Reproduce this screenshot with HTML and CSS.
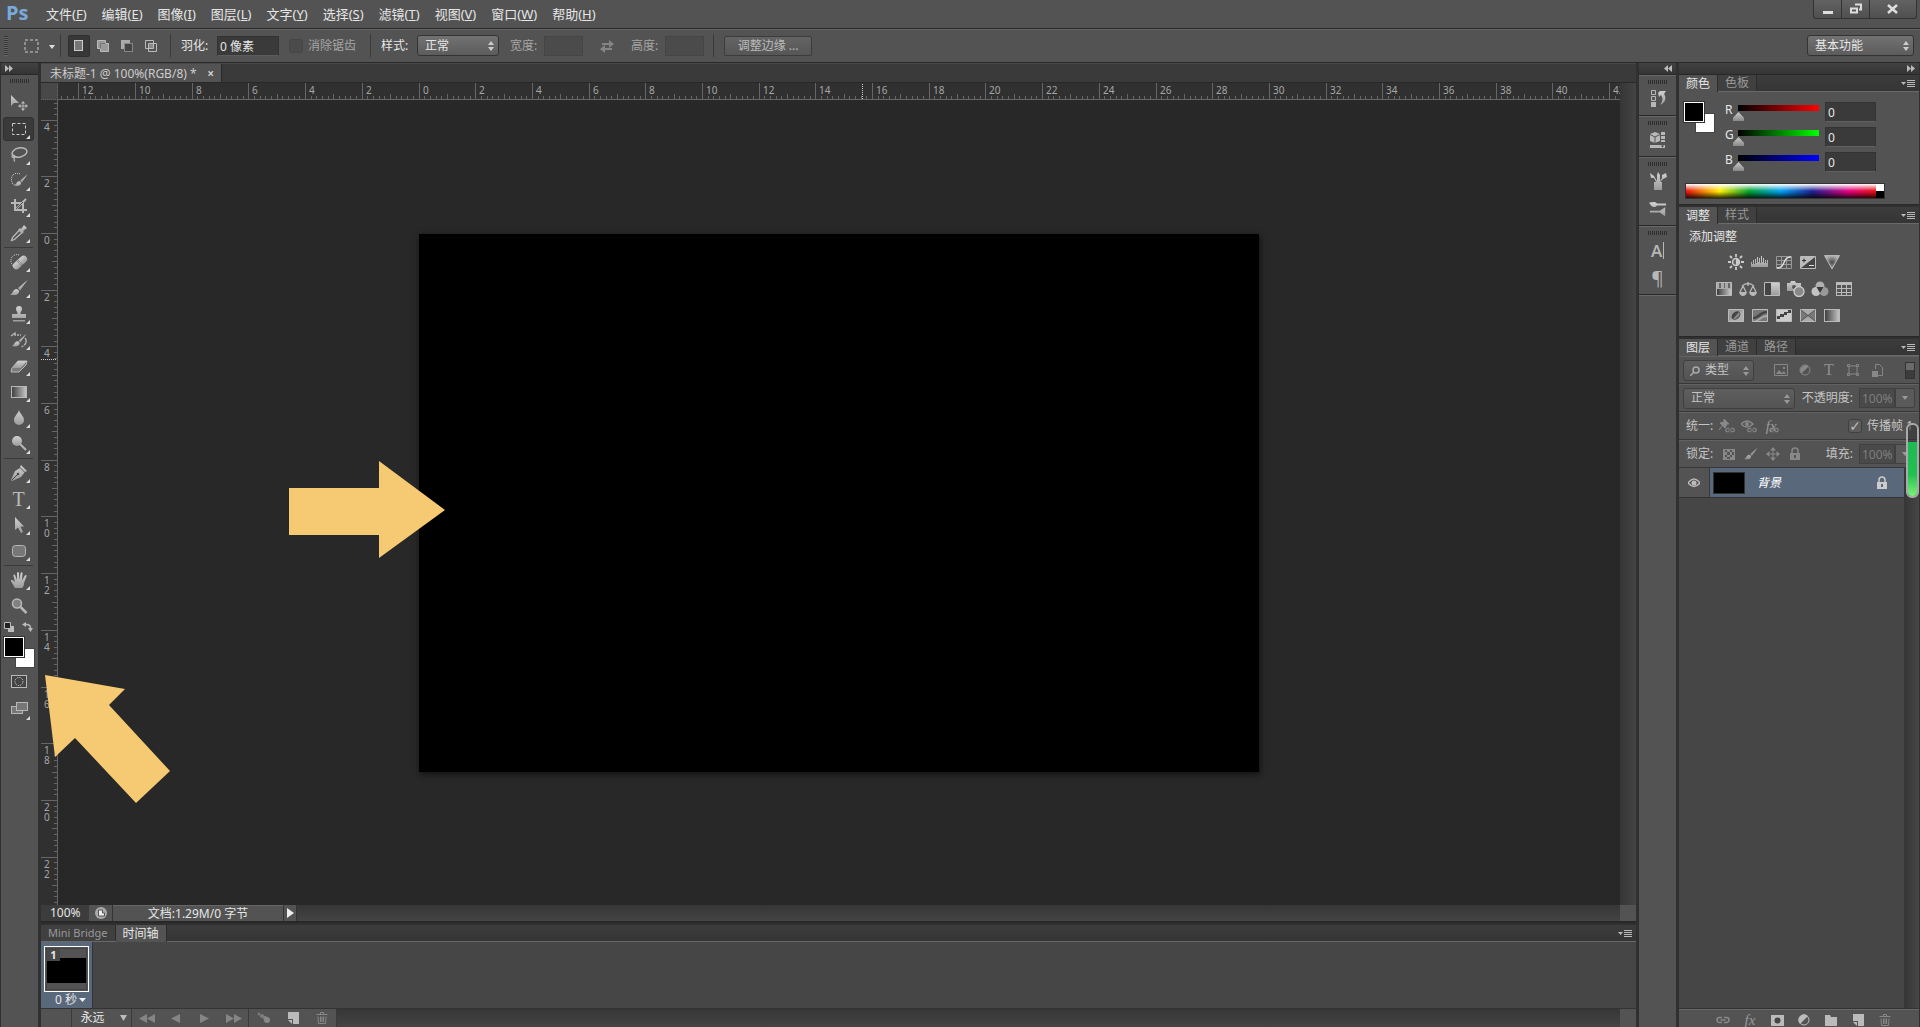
FILE: index.html
```html
<!DOCTYPE html>
<html lang="zh-CN">
<head>
<meta charset="utf-8">
<title>未标题-1 @ 100%(RGB/8)</title>
<link rel="stylesheet" href="styles.css">
</head>
<body>
<svg class="defs" aria-hidden="true">
  <defs>
    <linearGradient id="metal" x1="0" y1="0" x2="0" y2="1"><stop offset="0" stop-color="#d0d0d0"/><stop offset="1" stop-color="#9c9c9c"/></linearGradient>
    <linearGradient id="ramp"><stop offset="0" stop-color="#3c3c3c"/><stop offset="1" stop-color="#c8c8c8"/></linearGradient>
    <radialGradient id="glow"><stop offset="0" stop-color="#4a4a4a"/><stop offset="1" stop-color="#b4b4b4"/></radialGradient>
    <symbol id="updown" viewBox="0 0 6 10"><path d="M0 4l3-4 3 4zM0 6l3 4 3-4z" fill="currentColor"/></symbol>
    <symbol id="flyout" viewBox="0 0 14 8"><path d="M0 2h5L2.500 5z" fill="#b8b8b8"/><path d="M6 0h8v1H6zM6 2h8v1H6zM6 4h8v1H6zM6 6h8v1H6z" fill="#b8b8b8"/></symbol>
    <symbol id="link" viewBox="0 0 14 8"><path d="M6 1.500H3.500a2.500 2.500 0 0 0 0 5H6M8 1.500h2.500a2.500 2.500 0 0 1 0 5H8M4.500 4h5" fill="none" stroke="currentColor" stroke-width="1.600"/></symbol>
    <symbol id="trash" viewBox="0 0 12 12"><path d="M4.500 2V.500h3V2M.500 2.500h11M2 4.500l.5 7h7l.5-7M4.500 4.500v5.500M6 4.500v5.500M7.500 4.500v5.500" fill="none" stroke="currentColor"/></symbol>
    <symbol id="newpage" viewBox="0 0 12 12"><path d="M1 0h11v12H6V7H1z" fill="#bbb"/><path d="M1 8h4v4z" fill="#bbb"/></symbol>
    <symbol id="lock" viewBox="0 0 12 14"><path d="M3 6V4a3 3 0 0 1 6 0v2" fill="none" stroke="currentColor" stroke-width="1.500"/><path fill-rule="evenodd" d="M1 6h10v7H1zM5 8v3h2V8z" fill="currentColor"/></symbol>
    <symbol id="brush" viewBox="0 0 18 18"><path d="M17.500 1L8 9l2 2.500z" fill="url(#metal)"/><path d="M0 15.500c3-.5 2.500-5 6.500-5.500 2 .2 3 1.800 2.500 3.300C8 16.500 3 16.500 0 15.500z" fill="url(#metal)"/></symbol>
    <symbol id="move4" viewBox="0 0 12 12"><path d="M6 0l2.500 3h-2v2.500H9v-2L12 6 9 8.500v-2H6.500V9h2L6 12 3.500 9h2V6.500H3v2L0 6l3-2.500v2h2.500V3h-2z" fill="currentColor"/></symbol>
  </defs>
</svg>

<header class="menubar">
  <span class="logo">Ps</span>
  <nav class="menus">
    <button>文件(<u>F</u>)</button><button>编辑(<u>E</u>)</button><button>图像(<u>I</u>)</button><button>图层(<u>L</u>)</button><button>文字(<u>Y</u>)</button><button>选择(<u>S</u>)</button><button>滤镜(<u>T</u>)</button><button>视图(<u>V</u>)</button><button>窗口(<u>W</u>)</button><button>帮助(<u>H</u>)</button>
  </nav>
  <div class="window-controls">
    <button aria-label="最小化"><svg width="10" height="12"><path d="M0 8h10v3H0z" fill="#ddd"/></svg></button>
    <button aria-label="还原"><svg width="12" height="12"><path d="M5 1.500h6v5H9M1 5.500h6v4H1z" fill="none" stroke="#ddd" stroke-width="2"/></svg></button>
    <button class="close" aria-label="关闭"><svg width="12" height="12"><path d="M1 2l9 8M10 2l-9 8" stroke="#ddd" stroke-width="2.500"/></svg></button>
  </div>
</header>

<section class="options">
  <i class="grip-v"></i>
  <button class="tool-preset" aria-label="工具预设"><svg width="31" height="14"><rect x="1" y="1" width="13" height="12" fill="none" stroke="#ccc" stroke-dasharray="3 2"/><path d="M25 6h6l-3 4z" fill="#ddd"/></svg></button>
  <div class="opt-group modes">
    <button class="on" aria-label="新选区"><svg width="12" height="14"><rect x="1.500" y="1.500" width="8" height="10" fill="#777" stroke="#ccc"/></svg></button>
    <button aria-label="添加到选区"><svg width="14" height="14"><path d="M1.500 1.500h8v3h3v8h-8v-3h-3z" fill="#999" stroke="#bbb"/><path d="M4.500 9.500v-5h5" fill="none" stroke="#777"/></svg></button>
    <button aria-label="从选区减去"><svg width="14" height="14"><path d="M1 1h9v3H4v6H1z" fill="#aaa"/><rect x="4.500" y="4.500" width="8" height="8" fill="#444" stroke="#888"/></svg></button>
    <button aria-label="与选区交叉"><svg width="14" height="14"><path d="M4.500 4.500h5v5h-5z" fill="#888"/><path d="M1.500 1.500h8v8h-8zM4.500 4.500h8v8h-8z" fill="none" stroke="#bbb"/></svg></button>
  </div>
  <div class="opt-group">
    <label for="feather">羽化:</label><input id="feather" class="feather" value="0 像素">
    <span class="check"><input type="checkbox" id="aa" disabled><label class="dim" for="aa">消除锯齿</label></span>
  </div>
  <div class="opt-group">
    <label for="style">样式:</label>
    <span class="select style-select"><select id="style"><option>正常</option></select><svg><use href="#updown"/></svg></span>
    <span class="size"><label class="dim" for="w">宽度:</label><input id="w" disabled></span>
    <button class="swap" aria-label="交换"><svg width="14" height="14"><path d="M2 4h7V1l5 4-5 4V6H2zM12 9H5V6L0 10l5 4v-3h7z" fill="#858585"/></svg></button>
    <span class="size"><label class="dim" for="h">高度:</label><input id="h" disabled></span>
  </div>
  <div class="opt-group"><button class="refine" disabled>调整边缘 ...</button></div>
  <span class="select workspace-select"><select aria-label="工作区"><option>基本功能</option></select><svg><use href="#updown"/></svg></span>
</section>

<div class="shell">
  <aside class="toolbox">
    <div class="strip"><svg width="8" height="7"><path d="M0 0l4 3.500L0 7zM4 0l4 3.500L4 7z" fill="#bbb"/></svg></div>
    <i class="grip-h"></i>
    <div class="tools">
      <button aria-label="移动"><svg viewBox="0 0 18 18"><path d="M1 1v11l3-3h5z" fill="url(#metal)"/><use href="#move4" x="8" y="7" width="10" height="10" color="#bbb"/></svg></button>
      <button class="on more" aria-label="矩形选框"><svg viewBox="0 0 18 18"><rect x="2.500" y="3.500" width="13" height="11" fill="none" stroke="#ccc" stroke-dasharray="3 2"/></svg></button>
      <button class="more" aria-label="套索"><svg viewBox="0 0 18 18"><ellipse cx="9.500" cy="6.500" rx="7.500" ry="4.500" transform="rotate(-12 9.500 6.500)" fill="none" stroke="#b8b8b8" stroke-width="1.500"/><path d="M3 9c-2 1-1 3 1 2.500s1-2-1-2.500m1 2.500c1 2-1 3 1 4" fill="none" stroke="#b8b8b8" stroke-width="1.200"/></svg></button>
      <button class="more" aria-label="快速选择"><svg viewBox="0 0 18 18"><path d="M10 2C5 0 1 3 1.500 8S4 13 6 13" fill="none" stroke="#ccc" stroke-dasharray="1 1"/><use href="#brush" x="4" y="1" width="14" height="15"/></svg></button>
      <button class="more" aria-label="裁剪"><svg viewBox="0 0 18 18"><path d="M1 5h12v10M5 1v11h12M6 11L16 1" fill="none" stroke="#b8b8b8" stroke-width="2"/><path d="M6 11l7-7" stroke="#535353"/></svg></button>
      <button class="more" aria-label="吸管"><svg viewBox="0 0 18 18"><path d="M11 5l3-4 3 3-4 3 1 1-2 2-4-4 2-2z" fill="url(#metal)"/><path d="M9 6.500l-6.500 7-1 3 3-1 7-6.500" fill="none" stroke="#bbb" stroke-width="1.300"/></svg></button>
      <hr>
      <button class="more" aria-label="修复画笔"><svg viewBox="0 0 18 18"><path d="M9 2C4 0 0 5 1 9s3 5 5 4" fill="none" stroke="#ccc" stroke-dasharray="1 1"/><rect x="1.500" y="6" width="17" height="7" rx="3.500" transform="rotate(-43 10 9.500)" fill="url(#metal)"/><path d="M8 7l5 5M7 8l5 5" stroke="#666" stroke-dasharray="1 1"/></svg></button>
      <button class="more" aria-label="画笔"><svg viewBox="0 0 18 18"><use href="#brush"/></svg></button>
      <button class="more" aria-label="仿制图章"><svg viewBox="0 0 18 18"><path d="M6 4a3 3 0 1 1 6 0c0 2-1.500 2-1.500 5H16v4H2V9h5.500C7.500 6 6 6 6 4zM3 15h12v1.500H3z" fill="url(#metal)"/></svg></button>
      <button class="more" aria-label="历史画笔"><svg viewBox="0 0 18 18"><use href="#brush" x="2" y="2" width="15" height="15"/><path d="M1 5l4-3v2h6M15 7c3 3 0 8-4 9" fill="none" stroke="#b8b8b8" stroke-width="1.300" stroke-dasharray="8 1 2 1"/></svg></button>
      <button class="more" aria-label="橡皮擦"><svg viewBox="0 0 18 18"><path d="M8 4h9l-1 4-7 7H1l1-4z" fill="#7c7c7c" stroke="#b8b8b8"/><path d="M8 4h9l-6.500 7H2z" fill="url(#metal)"/></svg></button>
      <button class="more" aria-label="渐变"><svg viewBox="0 0 18 18"><rect x="1.500" y="3.500" width="15" height="11" fill="url(#ramp)" stroke="#b8b8b8"/></svg></button>
      <button class="more" aria-label="模糊"><svg viewBox="0 0 18 18"><path d="M9 1c1 4 5 6 5 10a5 5 0 0 1-10 0C4 7 8 5 9 1z" fill="url(#metal)"/></svg></button>
      <button class="more" aria-label="减淡"><svg viewBox="0 0 18 18"><circle cx="7" cy="6" r="5" fill="url(#metal)"/><path d="M10 9l6 6" stroke="#b8b8b8" stroke-width="2"/></svg></button>
      <hr>
      <button class="more" aria-label="钢笔"><svg viewBox="0 0 18 18"><path d="M11 1l6 6-2 1-5-5zM10 4l4.500 4.500L11 13 2 17 1 16 5 7z" fill="url(#metal)"/><path d="M2 16l5-5" stroke="#444"/><circle cx="8" cy="10" r="1.200" fill="#444"/></svg></button>
      <button class="more" aria-label="文字"><span class="type-icon">T</span></button>
      <button class="more" aria-label="路径选择"><svg viewBox="0 0 18 18"><path d="M5 1v13l3-2.500L11 17l2-1-2.500-5.500H14z" fill="url(#metal)"/></svg></button>
      <button class="more" aria-label="圆角矩形"><svg viewBox="0 0 18 18"><rect x="2.500" y="3.500" width="13" height="11" rx="3" fill="#777" stroke="#b8b8b8"/></svg></button>
      <hr>
      <button class="more" aria-label="抓手"><svg viewBox="0 0 18 18"><path d="M5 17L1.500 11C0 9 2 8 3 9.500L5 11 3.500 5c-.5-2 1.500-2 2 0L7 9V2.500c0-2 2-2 2 0L9.500 9l1-6.500c.5-2 2-1.500 2 0L12 9.500 14.500 5c1-1.500 2.500-1 2 .5L14 12c0 3-1 4-2 5z" fill="url(#metal)"/></svg></button>
      <button aria-label="缩放"><svg viewBox="0 0 18 18"><circle cx="7" cy="6.500" r="4.500" fill="#808080" stroke="#b8b8b8" stroke-width="1.500"/><path d="M10.500 10l6 6" stroke="#b8b8b8" stroke-width="2.500"/></svg></button>
    </div>
    <div class="mini">
      <button aria-label="默认颜色"><svg width="10" height="10"><path d="M4 4h6v6H4z" fill="#bbb"/><path d="M.500 .500h6v6h-6z" fill="#222" stroke="#bbb"/></svg></button>
      <button aria-label="切换颜色"><svg width="11" height="10"><path d="M3 2.500h2q3.500 0 3.500 4" fill="none" stroke="#bbb" stroke-width="1.500"/><path d="M0 2.500L4 0v5zM8.500 10L6 6h5z" fill="#bbb"/></svg></button>
    </div>
    <div class="swatches"><button class="bg" aria-label="背景色"></button><button class="fg" aria-label="前景色"></button></div>
    <div class="tools screen">
      <button aria-label="快速蒙版"><svg viewBox="0 0 18 18"><rect x="1.500" y="3.500" width="15" height="12" fill="#444" stroke="#b8b8b8"/><circle cx="9" cy="9.500" r="4" fill="none" stroke="#ddd" stroke-dasharray="1 1"/></svg></button>
      <button class="more" aria-label="屏幕模式"><svg viewBox="0 0 18 18"><rect x="1.500" y="7.500" width="11" height="7" fill="#777" stroke="#b8b8b8"/><rect x="6.500" y="3.500" width="11" height="8" fill="#777" stroke="#b8b8b8"/></svg></button>
    </div>
  </aside>

  <main class="document">
    <div class="doc-tabs"><div class="doc-tab">未标题-1 @ 100%(RGB/8) *<button aria-label="关闭文档">×</button></div></div>
    <div class="viewport">
      <div class="corner"></div>
      <svg class="ruler-x"></svg>
      <div class="track-v"></div>
      <svg class="ruler-y"></svg>
      <div class="pasteboard"><div class="artboard"></div></div>
    </div>
    <footer class="status">
      <input class="zoom" aria-label="缩放" value="100%">
      <button class="cell preview" aria-label="预览"><svg width="12" height="12"><circle cx="6" cy="6" r="6" fill="#aaa"/><path d="M3.500 3h4v3h2v3h-6z" fill="#eee" stroke="#555"/></svg></button>
      <span class="cell info">文档:1.29M/0 字节</span>
      <button class="cell arrow" aria-label="状态选项"><svg width="7" height="10"><path d="M0 0l7 5-7 5z" fill="#eee"/></svg></button>
      <span class="track-h"></span><span class="corner-cell"></span>
    </footer>
    <section class="timeline">
      <div class="tabs"><button class="latin">Mini Bridge</button><button class="active">时间轴</button><svg class="flyout"><use href="#flyout"/></svg></div>
      <div class="frames">
        <div class="frame"><div class="frame-thumb"><b>1</b><i></i></div><button class="delay">0 秒<svg width="7" height="4"><path d="M0 0h7L3.500 4z" fill="#eee"/></svg></button></div>
      </div>
      <div class="playback">
        <button class="loop">永远<svg width="7" height="6"><path d="M0 0h7L3.500 6z" fill="#bbb"/></svg></button>
        <div class="play-group">
          <button aria-label="第一帧"><svg width="16" height="9"><path d="M8 0v9L0 4.500zM16 0v9L8 4.500z" fill="#858585"/></svg></button>
          <button aria-label="上一帧"><svg width="9" height="9"><path d="M9 0v9L0 4.500z" fill="#858585"/></svg></button>
          <button aria-label="播放"><svg width="9" height="9"><path d="M0 0v9l9-4.500z" fill="#858585"/></svg></button>
          <button aria-label="下一帧"><svg width="16" height="9"><path d="M0 0v9l8-4.500zM8 0v9l8-4.500z" fill="#858585"/></svg></button>
        </div>
        <div class="play-group edit">
          <button aria-label="过渡"><svg width="14" height="12"><circle cx="2" cy="2" r="1.500" fill="#777"/><circle cx="5" cy="4" r="2" fill="#7c7c7c"/><circle cx="10" cy="8" r="3" fill="#888"/><circle cx="8" cy="6" r="2" fill="#888"/></svg></button>
          <button aria-label="复制帧"><svg width="12" height="12"><use href="#newpage"/></svg></button>
          <button class="faint" aria-label="删除帧"><svg width="12" height="12"><use href="#trash"/></svg></button>
        </div>
        <span class="track-h"></span><span class="corner-cell"></span>
      </div>
    </section>
  </main>

  <aside class="dock">
    <div class="strip"><svg width="8" height="7"><path d="M4 0L0 3.500 4 7zM8 0L4 3.500 8 7z" fill="#bbb"/></svg></div>
    <div class="dock-group"><i class="grip-h"></i><button aria-label="历史记录"><svg viewBox="0 0 18 18"><path d="M2.500 .500h4v4h-4zM2.500 6.500h4v4h-4z" fill="none" stroke="#b8b8b8"/><path d="M2 12h5v5H2z" fill="#b8b8b8"/><path d="M9 3l2-2h6l-2 3c3 4 1 9-4 11 3-4 3-7 1-10l-2 2z" fill="url(#metal)"/></svg></button></div>
    <div class="dock-group"><i class="grip-h"></i><button aria-label="属性"><svg viewBox="0 0 18 18"><path d="M6 1l5 2v7l-5 2-5-2V3z" fill="#b8b8b8"/><path d="M1 3.500L6 6l5-2.500M6 6v6" fill="none" stroke="#555"/><path d="M12 1h4v3h-4zM12 5h4v3h-4zM12 9h4v2h-4zM1 14h15v3H1z" fill="#b8b8b8"/><path d="M12 14.500h3l-1.500 2z" fill="#333"/></svg></button></div>
    <div class="dock-group"><i class="grip-h"></i><button aria-label="画笔预设"><svg viewBox="0 0 18 18"><path d="M5 10h8v8H5zM7 10L5 6H2L1 1l4 3 3 5V3l1-3 2 3v6l2-3V3l4-2 1 4-4 2-3 3z" fill="url(#metal)"/></svg></button><button aria-label="画笔"><svg viewBox="0 0 20 18"><path d="M0 2c4-1 7-1 9 1h10v2H9c-3 3-6 2-9-3zM1 11h11l6-4v10l-6-4H1z" fill="url(#metal)"/></svg></button></div>
    <div class="dock-group"><i class="grip-h"></i><button aria-label="字符"><span class="char-icon caret">A</span></button><button aria-label="段落"><span class="char-icon">¶</span></button></div>
    <div class="dock-rest"></div>
  </aside>

  <aside class="panels">
    <div class="strip"><svg width="8" height="7"><path d="M0 0l4 3.500L0 7zM4 0l4 3.500L4 7z" fill="#bbb"/></svg></div>
    <section class="panel">
      <div class="tabs"><button class="active">颜色</button><button>色板</button><svg class="flyout"><use href="#flyout"/></svg></div>
      <div class="color-body">
        <div class="swatches"><button class="bg" aria-label="背景色"></button><button class="fg" aria-label="前景色"></button></div>
        <div class="channels">
          <div class="channel"><label for="r">R</label><input type="range" class="red" aria-label="R" min="0" max="255" value="0"><input id="r" value="0"></div>
          <div class="channel"><label for="g">G</label><input type="range" class="green" aria-label="G" min="0" max="255" value="0"><input id="g" value="0"></div>
          <div class="channel"><label for="b">B</label><input type="range" class="blue" aria-label="B" min="0" max="255" value="0"><input id="b" value="0"></div>
        </div>
        <div class="spectrum"><i></i></div>
      </div>
    </section>
    <section class="panel">
      <div class="tabs"><button class="active">调整</button><button>样式</button><svg class="flyout"><use href="#flyout"/></svg></div>
      <div class="adjust-body">
        <p>添加调整</p>
        <div class="adjust-row">
          <button aria-label="亮度/对比度"><svg viewBox="0 0 18 16"><circle cx="9" cy="8" r="3.500" fill="#666" stroke="#ccc" stroke-width="1.500"/><path d="M9 5a3 3 0 0 1 0 6z" fill="#ccc"/><path d="M9 0v3M9 13v3M1 8h3M14 8h3M3 2l2 2M15 2l-2 2M3 14l2-2M15 14l-2-2" stroke="#ccc" stroke-width="1.800"/></svg></button>
          <button aria-label="色阶"><svg viewBox="0 0 18 16"><path d="M0 13V8h1v2h1V6h1v4h1V5h1v4h1V3h1v5h1V4h1v5h1V2h1v6h1V4h1v5h1V6h1v3h1V6h1v7z" fill="url(#metal)"/></svg></button>
          <button aria-label="曲线"><svg viewBox="0 0 18 16"><path d="M1.500 2.500h15v12h-15zM6.500 2v12M11.500 2v12M1 6.500h15M1 10.500h15" fill="#555" stroke="#999"/><path d="M2 14c9 0 5-11 14-11" fill="none" stroke="#ddd" stroke-width="1.500"/></svg></button>
          <button aria-label="曝光度"><svg viewBox="0 0 18 16"><path d="M1.500 2.500h15v12h-15z" fill="#444" stroke="#bbb"/><path d="M2 14V3h14z" fill="#bbb"/><path d="M3 6.500h4M5 4.500v4" stroke="#333"/><path d="M10 11.500h5" stroke="#ddd"/></svg></button>
          <button aria-label="自然饱和度"><svg viewBox="0 0 18 16"><path d="M1.500 1.500h15L9 15z" fill="url(#glow)" stroke="#b8b8b8"/></svg></button>
        </div>
        <div class="adjust-row">
          <button aria-label="色相/饱和度"><svg viewBox="0 0 18 16"><path d="M1.500 1.500h15v13h-15z" fill="#aaa" stroke="#bbb"/><path d="M4 2h2v5H4zM9 2h1v5H9zM13 2h2v5h-2z" fill="#666"/><path d="M2 8h14v6H2z" fill="url(#ramp)"/></svg></button>
          <button aria-label="色彩平衡"><svg viewBox="0 0 18 16"><path d="M9 1v4M3 5q6-5 12 0M4 5L1 11M4 5l3 6M14 5l-3 6M14 5l3 6" fill="none" stroke="#b8b8b8" stroke-width="1.300"/><path d="M0 11h8q-1 4-4 4t-4-4zM10 11h8q-1 4-4 4t-4-4z" fill="#b8b8b8"/></svg></button>
          <button aria-label="黑白"><svg viewBox="0 0 18 16"><path d="M1.500 1.500h15v13h-15z" fill="#444" stroke="#bbb"/><path d="M8 2h8v12H8z" fill="url(#metal)"/></svg></button>
          <button aria-label="照片滤镜"><svg viewBox="0 0 18 16"><path d="M0 2h3l1-2h4l1 2h5v8H0z" fill="url(#metal)"/><circle cx="7" cy="6" r="2" fill="#555"/><circle cx="12" cy="10.500" r="5" fill="#888" stroke="#ccc" stroke-width="1.300"/></svg></button>
          <button aria-label="通道混合器"><svg viewBox="0 0 18 16"><circle cx="9" cy="5" r="4.500" fill="#b0b0b0"/><circle cx="5" cy="10.500" r="4.500" fill="#c4c4c4"/><circle cx="13" cy="10.500" r="4.500" fill="#999"/><path d="M5.500 6h7L9 12z" fill="#3a3a3a"/></svg></button>
          <button aria-label="颜色查找"><svg viewBox="0 0 18 16"><path d="M1 1h16v14H1z" fill="#bbb"/><path d="M2 4h4v3H2zM7 4h4v3H7zM12 4h4v3h-4zM2 8h4v3H2zM7 8h4v3H7zM12 8h4v3h-4zM2 12h4v2H2zM7 12h4v2H7zM12 12h4v2h-4z" fill="#555"/></svg></button>
        </div>
        <div class="adjust-row">
          <button aria-label="反相"><svg viewBox="0 0 18 16"><path d="M1.500 1.500h15v12h-15z" fill="#999" stroke="#bbb"/><path d="M2 13L16 2v11z" fill="#b0b0b0"/><ellipse cx="9" cy="7.500" rx="5" ry="3.500" transform="rotate(-40 9 7.500)" fill="#444"/><path d="M6 11L12 4q2 2-1 5t-5 2z" fill="#888"/></svg></button>
          <button aria-label="色调分离"><svg viewBox="0 0 18 16"><path d="M1.500 1.500h15v12h-15z" fill="#777" stroke="#bbb"/><path d="M2 9c5 0 6-6 14-6v2C10 6 8 11 2 11z" fill="#444"/><path d="M2 13c5 0 8-6 14-6v2c-5 0-6 3-9 4z" fill="#aaa"/></svg></button>
          <button aria-label="阈值"><svg viewBox="0 0 18 16"><path d="M1.500 1.500h15v12h-15z" fill="#ccc" stroke="#bbb"/><path d="M2 8h3V6h4V4h4V2h3v3h-4v2H9v2H5v2H2z" fill="#444"/></svg></button>
          <button aria-label="可选颜色"><svg viewBox="0 0 18 16"><path d="M1.500 1.500h15v12h-15z" fill="#777" stroke="#bbb"/><path d="M2 2h14L9 8zM2 13h14L9 8z" fill="#aaa"/><path d="M2 2l14 11M16 2L2 13" stroke="#555"/></svg></button>
          <button aria-label="渐变映射"><svg viewBox="0 0 18 16"><rect x="1.500" y="1.500" width="15" height="12" fill="url(#ramp)" stroke="#b8b8b8"/></svg></button>
        </div>
      </div>
    </section>
    <section class="panel layers">
      <div class="tabs"><button class="active">图层</button><button>通道</button><button>路径</button><svg class="flyout"><use href="#flyout"/></svg></div>
      <div class="layer-row">
        <span class="select dim kind-select"><svg class="search" viewBox="0 0 10 10"><circle cx="6" cy="4" r="3" fill="none" stroke="#aaa" stroke-width="1.500"/><path d="M4 6L0 10" stroke="#aaa" stroke-width="1.500"/></svg><select aria-label="过滤" disabled><option>类型</option></select><svg><use href="#updown"/></svg></span>
        <div class="filters">
          <button aria-label="像素图层"><svg viewBox="0 0 14 14"><path d="M.500 1.500h13v11H.500z" fill="none" stroke="#888"/><path d="M2 11l3-4 3 3 2-2 2 3zM9 4h2v2H9z" fill="#888"/></svg></button>
          <button aria-label="调整图层"><svg viewBox="0 0 14 14"><circle cx="7" cy="7" r="5" fill="none" stroke="#888"/><path d="M3.500 10.500l7-7a5 5 0 0 0-7 7z" fill="#888"/></svg></button>
          <button aria-label="文字图层"><span class="t-small">T</span></button>
          <button aria-label="形状图层"><svg viewBox="0 0 14 14"><path d="M3 3h8v8H3z" fill="none" stroke="#888"/><path d="M1.500 1.500h2v2h-2zM10.500 1.500h2v2h-2zM1.500 10.500h2v2h-2zM10.500 10.500h2v2h-2z" fill="#535353" stroke="#888"/></svg></button>
          <button aria-label="智能对象"><svg viewBox="0 0 14 14"><path d="M5.500 6V1.500h4l3 3v8H8" fill="none" stroke="#888"/><path d="M2 8h6v6H2z" fill="#888"/></svg></button>
        </div>
        <button class="toggle" aria-label="过滤开关"><i></i></button>
      </div>
      <div class="layer-row">
        <span class="select dim blend-select"><select aria-label="混合模式" disabled><option>正常</option></select><svg><use href="#updown"/></svg></span>
        <span class="percent"><label for="op">不透明度:</label><input id="op" value="100%" disabled><button aria-label="不透明度" disabled><svg width="6" height="4"><path d="M0 0h6L3 4z" fill="#999"/></svg></button></span>
      </div>
      <div class="layer-row">
        <span>统一:</span>
        <div class="row-icons">
          <button aria-label="统一位置"><svg viewBox="0 0 16 14"><path d="M5 0l5 5-2 0-2 4-5-5 4-1zM3 7L0 11" fill="#888" stroke="#888"/><use href="#link" x="6" y="8" width="10" height="6"/></svg></button>
          <button aria-label="统一可见性"><svg viewBox="0 0 16 14"><path d="M0 5q6-6 12 0-6 6-12 0z" fill="none" stroke="#888" stroke-width="1.500"/><circle cx="6" cy="5" r="2" fill="#888"/><use href="#link" x="6" y="8" width="10" height="6"/></svg></button>
          <button aria-label="统一样式"><span class="fx">fx</span><svg class="over" viewBox="0 0 16 14"><use href="#link" x="6" y="8" width="10" height="6"/></svg></button>
        </div>
        <span class="check propagate"><input type="checkbox" id="prop" checked disabled><label for="prop">传播帧 1</label></span>
      </div>
      <div class="layer-row">
        <span>锁定:</span>
        <div class="row-icons locks">
          <button aria-label="锁定透明像素"><svg viewBox="0 0 14 14"><path d="M1 2h12v11H1z" fill="#888"/><path d="M3 3h2v2H3zM8 3h2v2H8zM5 5h3v3H5zM10 5h2v3h-2zM3 8h2v2H3zM8 8h2v2H8zM5 10h3v2H5z" fill="#555"/></svg></button>
          <button aria-label="锁定图像像素"><svg viewBox="0 0 18 18" opacity=".75"><use href="#brush"/></svg></button>
          <button aria-label="锁定位置"><svg viewBox="0 0 12 12"><use href="#move4"/></svg></button>
          <button aria-label="锁定全部"><svg viewBox="0 0 12 14"><use href="#lock"/></svg></button>
        </div>
        <span class="percent"><label for="fill">填充:</label><input id="fill" value="100%" disabled><button aria-label="填充" disabled><svg width="6" height="4"><path d="M0 0h6L3 4z" fill="#999"/></svg></button></span>
      </div>
      <div class="list-wrap">
        <div class="list">
          <div class="layer">
            <button class="eye" aria-label="可见性"><svg width="12" height="10" viewBox="0 0 12 10"><path d="M0 5q6-8 12 0-6 7-12 0z" fill="none" stroke="#bbb" stroke-width="1.500"/><circle cx="6" cy="5" r="2.500" fill="#bbb"/></svg></button>
            <div class="layer-main"><i class="thumb"></i><em>背景</em><svg width="12" height="14"><use href="#lock"/></svg></div>
          </div>
        </div>
        <div class="list-track"></div>
      </div>
      <footer class="layer-actions">
        <button class="faint" aria-label="链接图层"><svg width="14" height="8"><use href="#link"/></svg></button>
        <button class="faint" aria-label="图层样式"><span class="fx">fx</span></button>
        <button aria-label="添加蒙版"><svg width="13" height="11"><path d="M0 0h13v11H0z" fill="#bbb"/><circle cx="6.500" cy="5.500" r="3" fill="#444"/></svg></button>
        <button aria-label="调整图层"><svg width="14" height="12"><circle cx="7" cy="6" r="5" fill="none" stroke="#bbb"/><path d="M3 10l8-8a5.500 5.500 0 0 0-8 8z" fill="#bbb"/></svg></button>
        <button aria-label="新建组"><svg width="12" height="11"><path d="M0 0h5l1 2h6v9H0z" fill="#bbb"/></svg></button>
        <button aria-label="新建图层"><svg width="12" height="12"><use href="#newpage"/></svg></button>
        <button class="faint" aria-label="删除图层"><svg width="12" height="12"><use href="#trash"/></svg></button>
      </footer>
    </section>
  </aside>
</div>

<svg class="pointer right" width="156" height="97" viewBox="0 0 156 97"><path d="M0 27h90V0l66 49-66 48V74H0z" fill="#f5ca72"/></svg>
<svg class="pointer up-left" width="125" height="128" viewBox="0 0 125 128"><path d="M0 0l80 14-16 16 61 66-34 32-61-65-20 19z" fill="#f5ca72"/></svg>
<div class="meter"><i></i></div>
<script src="rulers.js"></script>
</body>
</html>
```
FILE: rulers.js
```js
// Centimetre rulers at 72 dpi, measured from the artboard's top left corner.
const CM = 72 / 2.54;
const NS = 'http://www.w3.org/2000/svg';

function node(name, attrs, text) {
  const el = document.createElementNS(NS, name);
  for (const key in attrs) el.setAttribute(key, attrs[key]);
  if (text !== undefined) el.textContent = text;
  return el;
}

function drawRuler(svg, horizontal, origin, cursor) {
  svg.replaceChildren();
  const length = horizontal ? svg.clientWidth : svg.clientHeight;
  const depth = 17;
  const step = CM / 5;
  let path = '';
  for (let i = Math.ceil(-origin / step); origin + i * step < length; i++) {
    const at = Math.floor(origin + i * step);
    const size = i % 10 === 0 ? depth : i % 5 === 0 ? 6 : 4;
    path += horizontal ? `M${at + 0.5} ${depth - size}v${size}` : `M${depth - size} ${at + 0.5}h${size}`;
    if (i % 10 !== 0) continue;
    const label = String(Math.abs(i / 5));
    if (horizontal) svg.append(node('text', { x: at + 4, y: 11 }, label));
    else [...label].forEach((digit, k) => svg.append(node('text', { x: 3, y: at + 11 + k * 10 }, digit)));
  }
  path += horizontal ? `M0 16.5h${length}` : `M16.5 0v${length}`;
  svg.append(node('path', { d: path, class: 'ticks' }));
  svg.append(node('path', { d: horizontal ? `M${cursor} 1v16` : `M0 ${cursor}h16`, class: 'cursor' }));
}

function layout() {
  const art = document.querySelector('.artboard').getBoundingClientRect();
  const rx = document.querySelector('.ruler-x');
  const ry = document.querySelector('.ruler-y');
  drawRuler(rx, true, art.left - rx.getBoundingClientRect().left, 804.5);
  drawRuler(ry, false, art.top - ry.getBoundingClientRect().top, 259.5);
}

layout();
window.addEventListener('resize', layout);
```
FILE: styles.css
```css
* { box-sizing: border-box; }
html, body { height: 100%; margin: 0; }
body {
  display: flex; flex-direction: column; overflow: hidden; position: relative;
  background: #535353; color: #e6e6e6;
  font: 12px/16px "Noto Sans", "Noto Sans CJK SC", sans-serif;
}
button, input, select { font: inherit; color: inherit; margin: 0; padding: 0; border: 0; background: none; border-radius: 0; }
button { display: inline-flex; align-items: center; justify-content: center; }
svg { display: block; flex: none; }
p { margin: 0; }
.defs { position: absolute; width: 0; height: 0; }
.dim { color: #a6a6a6; }

.menubar { display: flex; flex: none; height: 29px; border-bottom: 1px solid #282828; }
.logo { width: 46px; padding-left: 6px; font: bold 20px/26px "Open Sans", sans-serif; color: #79aadb; }
.menus { display: flex; gap: 15px; height: 27px; font-size: 13px; white-space: nowrap; }
.window-controls { display: flex; height: 19px; margin-left: auto; margin-right: 3px; border: 1px solid #333; border-top: 0; border-radius: 0 0 3px 3px; background: linear-gradient(#626262, #505050); }
.window-controls button { width: 28px; border-right: 1px solid #333; }
.window-controls .close { width: 46px; border: 0; }

.options { display: flex; align-items: center; flex: none; height: 34px; padding: 0 6px 1px 4px; border-top: 1px solid #686868; border-bottom: 1px solid #282828; white-space: nowrap; }
.grip-v { width: 4px; height: 20px; background: repeating-linear-gradient(#333 0 1px, #686868 1px 2px); }
.tool-preset { width: 52px; height: 22px; padding-left: 10px; }
.opt-group { display: flex; align-items: center; height: 23px; padding: 0 9px 0 10px; border-left: 1px solid #3a3a3a; }
.opt-group label { min-width: 28px; }
.modes { gap: 2px; padding: 0 8px 0 7px; }
.modes button { width: 22px; height: 22px; border-radius: 2px; }
.modes .on { background: #383838; border: 1px solid #303030; }
.options input:not([type]) { height: 20px; border: 1px solid #333; background: #3a3a3a; border-bottom-color: #5c5c5c; padding-left: 2px; }
.options input:disabled { background: #4b4b4b; border-color: #454545; }
.feather { width: 62px; margin-left: 8px; }
.check { display: flex; align-items: center; gap: 5px; }
.opt-group .check { margin: 0 5px 0 10px; }
.check input { appearance: none; width: 14px; height: 14px; border: 1px solid #404040; border-radius: 3px; background: #5c5c5c; }
.select { position: relative; display: flex; border: 1px solid #333; border-radius: 3px; background: linear-gradient(#727272, #5c5c5c); }
.select select { appearance: none; width: 100%; height: 19px; padding-left: 7px; opacity: 1; color: inherit; }
.select option { background: #535353; }
.select svg { position: absolute; right: 4px; top: 5px; width: 6px; height: 10px; color: #ccc; pointer-events: none; }
.select.dim { background: linear-gradient(#5e5e5e, #545454); border-color: #3f3f3f; color: #c4c4c4; }
.select.dim svg { color: #999; }
.style-select { width: 82px; margin: 0 11px 0 8px; }
.size { display: flex; align-items: center; gap: 6px; }
.size input { width: 39px; }
.swap { width: 48px; }
.refine { width: 88px; height: 20px; color: #bbb; border: 1px solid #3c3c3c; border-radius: 2px; background: linear-gradient(#646464, #565656); }
.workspace-select { width: 107px; margin-left: auto; }

.shell { display: flex; flex: 1; min-height: 0; background: #303030; }
.strip { display: flex; align-items: center; flex: none; height: 12px; padding: 0 4px; background: linear-gradient(#424242, #353535); border-bottom: 1px solid #282828; }
.grip-h { display: block; flex: none; width: 19px; height: 4px; margin: 4px auto; background: repeating-linear-gradient(90deg, #2e2e2e 0 1px, #535353 1px 2px); }

.toolbox { display: flex; flex-direction: column; flex: none; width: 38px; margin-right: 3px; background: #535353; border-left: 1px solid #303030; }
.tools { display: flex; flex-direction: column; align-items: center; margin-top: 3px; padding-right: 2px; }
.tools button { position: relative; width: 31px; height: 24px; margin: 1px 0; border-radius: 3px; border: 1px solid transparent; }
.tools svg { width: 18px; height: 18px; }
.tools .on { background: #3a3a3a; border-color: #303030; }
.tools .more::after { content: ""; position: absolute; right: 3px; bottom: 1px; border: 2px solid #ddd; border-top-color: transparent; border-left-color: transparent; }
.tools hr { width: 29px; height: 1px; margin: 1px 0; border: 0; background: #3a3a3a; }
.type-icon { font: 20px/20px "Liberation Serif", serif; color: #bbb; }
.mini { display: flex; justify-content: space-between; align-items: center; height: 12px; padding: 0 5px 0 3px; margin: 2px 0 4px; }
.swatches { position: relative; width: 32px; height: 32px; }
.toolbox .swatches { margin: 0 auto 0 3px; }
.swatches button { position: absolute; width: 20px; height: 20px; }
.swatches .bg { right: 1px; bottom: 1px; background: #fff; border: 1px solid #444; }
.swatches .fg { left: 0; top: 0; background: #000; border: 1px solid #fff; outline: 1px solid #333; }
.screen { margin-top: 0; }
.screen button { height: 25px; }
.screen svg { margin-bottom: 3px; }

.document { display: flex; flex-direction: column; flex: 1; min-width: 0; }
.doc-tabs { display: flex; flex: none; height: 20px; background: #3a3a3a; border-top: 1px solid #484848; border-bottom: 1px solid #282828; }
.doc-tab { display: flex; align-items: center; gap: 10px; padding: 1px 6px 0 9px; background: #535353; border-right: 1px solid #282828; color: #ccc; line-height: 17px; white-space: nowrap; }
.doc-tab button { width: 8px; font-weight: bold; }
.viewport { display: grid; grid-template: 17px minmax(0, 1fr) / 17px minmax(0, 1fr) 16px; flex: 1; min-height: 0; }
.corner { background: #484848; border-right: 1px dotted #666; border-bottom: 1px dotted #666; }
.ruler-x, .ruler-y { width: 100%; height: 100%; overflow: hidden; background: #303030; }
.ruler-x text, .ruler-y text { fill: #a6a6a6; font: 10px "Noto Sans", sans-serif; }
.ticks { stroke: #666; fill: none; }
.cursor { stroke: #ccc; stroke-dasharray: 1 1; }
.track-v { grid-column: 3; grid-row: 1 / 3; background: linear-gradient(90deg, #363636, #444); }
.ruler-y { grid-row: 2; grid-column: 1; }
.pasteboard { display: grid; place-items: center; background: #282828; overflow: hidden; }
.artboard { width: 840px; height: 538px; background: #000; box-shadow: 1px 2px 6px #111; }
.status { display: flex; flex: none; height: 18px; border-bottom: 2px solid #282828; }
.zoom { width: 48px; padding-left: 9px; background: #3c3c3c; }
.cell { display: flex; align-items: center; justify-content: center; background: #535353; border-right: 1px solid #333; }
.preview { width: 24px; }
.info { width: 171px; border-top: 1px solid #666; }
.arrow { width: 13px; }
.track-h { flex: 1; background: linear-gradient(#363636, #444); }
.corner-cell { width: 16px; background: #535353; }

.tabs { display: flex; flex: none; height: 17px; background: linear-gradient(#3c3c3c, #353535); border-bottom: 1px solid #696969; color: #999; line-height: 16px; position: relative; }
.tabs button { padding: 0 7px; background: #404040; border-right: 1px solid #2c2c2c; height: 16px; }
.tabs .active { background: #535353; color: #e6e6e6; height: 17px; }
.tabs .latin { font-size: 11px; }
.flyout { position: absolute; right: 4px; top: 5px; width: 14px; height: 8px; }
.timeline { flex: none; padding-top: 2px; }
.frames { height: 66px; background: #464646; }
.frame { width: 52px; height: 66px; padding: 4px 3px 0; background: #5a687c; border-right: 1px solid #333; }
.frame-thumb { display: grid; grid-template-rows: 9px 25px; height: 46px; border: 1px solid #fff; background: #535353; outline: 1px solid #444; outline-offset: -3px; padding: 2px; }
.frame-thumb b { z-index: 1; width: 13px; height: 12px; background: #484848; font-size: 11px; line-height: 12px; text-align: center; }
.frame-thumb i { background: #000; }
.delay { width: 100%; height: 16px; gap: 2px; padding-left: 8px; }
.playback { display: flex; height: 19px; padding-left: 30px; background: #535353; border-top: 1px solid #333; }
.loop { width: 61px; gap: 15px; padding-left: 4px; border: solid #3a3a3a; border-width: 0 1px; }
.play-group { display: flex; width: 117px; border-right: 1px solid #3a3a3a; }
.play-group button { flex: 1; }
.edit { width: 88px; }
.faint { color: #888; }

.dock { display: flex; flex-direction: column; flex: none; width: 37px; margin: 0 3px; }
.dock .strip { justify-content: flex-end; }
.dock-group { display: flex; flex-direction: column; align-items: center; flex: none; padding-bottom: 2px; background: #535353; border-top: 1px solid #686868; border-bottom: 1px solid #282828; }
.dock-group .grip-h { margin: 4px auto 1px; }
.dock-group button { width: 28px; height: 28px; }
.dock-group svg { width: 18px; height: 18px; }
.dock-rest { flex: 1; background: #535353; border-top: 1px solid #686868; }
.char-icon { font: 19px/17px "Open Sans", sans-serif; color: #b8b8b8; }
.caret { font-size: 17px; font-weight: 600; padding-right: 1px; border-right: 1px solid #b8b8b8; }

.panels { display: flex; flex-direction: column; flex: none; width: 241px; border-right: 1px solid #303030; }
.panels .strip { justify-content: flex-end; }
.panel { flex: none; margin-bottom: 2px; background: #535353; border-bottom: 1px solid #282828; }
.color-body { display: grid; grid-template-columns: 40px 1fr; height: 112px; padding: 10px 0 0 6px; }
.color-body .swatches { margin-left: -1px; }
.channels { display: flex; flex-direction: column; gap: 5px; }
.channel { display: flex; align-items: center; height: 20px; }
.channel label { width: 13px; line-height: 14px; height: 18px; }
.channel input:not([type]) { width: 51px; height: 20px; margin-left: 6px; padding-left: 2px; background: #3a3a3a; border: 1px solid #333; border-bottom-color: #606060; }
.channel input[type=range] { appearance: none; width: 86px; height: 18px; background-repeat: no-repeat; background-size: 100% 6px; background-position: 0 2px; outline: 0; margin-left: -5px; }
.channel input[type=range]::-webkit-slider-thumb { appearance: none; width: 11px; height: 9px; margin-top: 9px; background: linear-gradient(#ccc, #888); clip-path: polygon(50% 0, 100% 65%, 100% 100%, 0 100%, 0 65%); }
.red { background-image: linear-gradient(90deg, #535353 5px, #000 5px, #f00); }
.green { background-image: linear-gradient(90deg, #535353 5px, #000 5px, #0f0); }
.blue { background-image: linear-gradient(90deg, #535353 5px, #000 5px, #00f); }
.spectrum { grid-column: 1 / 3; display: flex; justify-content: flex-end; width: 200px; height: 16px; margin-top: 6px; border: 1px solid #333; background: linear-gradient(#fff, transparent 50%, transparent 55%, #000c), linear-gradient(90deg, #e81010, #ffee00 17%, #00a030 32%, #00a0f0 48%, #202090 64%, #e4007f 82%, #e81010 96%); }
.spectrum i { width: 8px; background: linear-gradient(#fff 50%, #000 50%); }
.adjust-body { height: 112px; padding-top: 5px; }
.adjust-body p { padding: 0 0 5px 10px; }
.adjust-row { display: flex; justify-content: center; gap: 6px; height: 27px; padding-right: 30px; }
.adjust-row button { width: 18px; height: 24px; }
.adjust-row svg { width: 18px; height: 16px; }

.layers { display: flex; flex-direction: column; flex: 1; min-height: 0; margin: 0; border: 0; color: #c4c4c4; }
.layer-row { display: flex; align-items: center; flex: none; height: 28px; padding: 0 4px 0 7px; border-bottom: 1px solid #383838; border-top: 1px solid #626262; white-space: nowrap; }
.layer-row:has(.select) { padding-left: 4px; }
.kind-select { width: 71px; }
.kind-select select { padding-left: 21px; }
.select .search { left: 6px; right: auto; width: 10px; }
.blend-select { width: 112px; }
.filters { display: flex; gap: 10px; margin-left: 20px; }
.filters svg { width: 14px; height: 14px; }
.filters button { width: 14px; height: 16px; }
.t-small { font: 16px/16px "Liberation Serif", serif; color: #909090; }
.toggle { width: 10px; height: 17px; margin-left: auto; align-items: flex-start; background: #3c3c3c; border: 1px solid #333; }
.toggle i { width: 8px; height: 7px; background: #6a6a6a; }
.percent { display: flex; align-items: center; margin-left: auto; }
.percent label { margin-right: 6px; }
.percent input { width: 36px; height: 20px; padding-left: 2px; color: #7e7e7e; background: #4a4a4a; border: 1px solid #404040; }
.percent button { width: 20px; height: 20px; background: #5a5a5a; border: 1px solid #404040; border-radius: 0 2px 2px 0; }
.row-icons { display: flex; gap: 6px; margin-left: 6px; color: #888; }
.row-icons button { position: relative; width: 16px; height: 16px; }
.row-icons svg { width: 16px; height: 14px; }
.locks { margin-left: 8px; }
.over { position: absolute; left: 0; top: 1px; }
.fx { font: italic 15px/14px "Liberation Serif", serif; color: #999; }
.propagate { margin-left: auto; padding-right: 2px; }
.propagate input { display: grid; place-items: center; }
.propagate input::before { content: "✓"; color: #bbb; font: bold 14px/12px "DejaVu Sans", sans-serif; }
.list-wrap { display: flex; flex: 1; min-height: 0; }
.list { flex: 1; background: #464646; }
.list-track { width: 15px; background: linear-gradient(90deg, #363636, #464646); }
.layer { display: flex; height: 30px; background: #535353; border-bottom: 1px solid #333; }
.eye { width: 31px; border-right: 1px solid #383838; }
.layer-main { display: flex; align-items: center; flex: 1; padding: 0 16px 0 3px; background: #5a687c; color: #fff; }
.layer-main em { margin: 0 auto 0 12px; }
.layer-main svg { color: #ccc; }
.thumb { width: 32px; height: 22px; background: #000; border: 1px solid #333; }
.layer-actions { display: flex; align-items: center; flex: none; gap: 13px; height: 18px; padding: 3px 0 0 37px; border-top: 1px solid #696969; box-shadow: 0 -1px #333; }
.layer-actions button { width: 14px; height: 14px; }

.pointer { position: absolute; }
.right { left: 289px; top: 461px; }
.up-left { left: 45px; top: 675px; }
.meter { position: absolute; right: 1px; top: 423px; width: 13px; height: 75px; display: flex; align-items: flex-end; border: 2px solid #aaa; border-radius: 6px; background: #3338; }
.meter i { width: 100%; height: 54px; border-radius: 0 0 4px 4px; background: linear-gradient(#1db954, #20c050 60%, #7ef07a); }
```
